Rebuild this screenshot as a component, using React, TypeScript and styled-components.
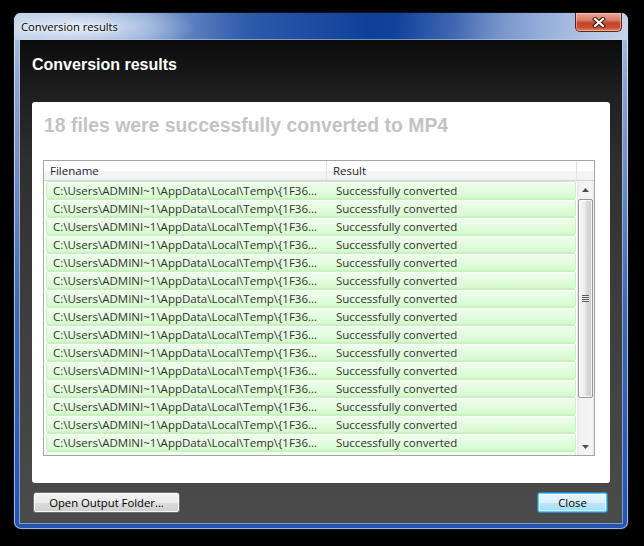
import React from "react";
import styled, { createGlobalStyle } from "styled-components";

const Global = createGlobalStyle`
  html, body { margin: 0; padding: 0; background: #000; }
  body { width: 644px; height: 546px; overflow: hidden; }
`;

const UI_FONT = `"Open Sans", "Noto Sans", sans-serif`;
const HEAD_FONT = `"Liberation Sans", Arial, sans-serif`;

const Stage = styled.div`
  padding: 13px 0 0 14px;
`;

const Window = styled.div`
  width: 614px;
  height: 516px;
  box-sizing: border-box;
  display: flex;
  flex-direction: column;
  border-radius: 7px;
  background: linear-gradient(to bottom, #b5c7e1 0px, #8aa4cd 70px, #3f68b2 300px, #2356b1 100%);
  box-shadow: 0 0 0 1px #101216, inset 0 0 0 1px rgba(255, 255, 255, 0.55);
  overflow: hidden;
`;

const TitleBar = styled.div`
  height: 27px;
  flex: none;
  display: flex;
  align-items: flex-start;
  justify-content: space-between;
  padding: 0 6px 0 7px;
  border-radius: 7px 7px 0 0;
  background:
    radial-gradient(ellipse 120px 26px at 62px 14px, rgba(232, 240, 250, 0.95), rgba(232, 240, 250, 0)),
    linear-gradient(100deg, rgba(255,255,255,0) 62%, rgba(255,255,255,0.35) 80%, rgba(255,255,255,0.5) 100%),
    linear-gradient(to right, #b3c6e2 0%, #7f9dd0 22%, #2d5aaa 38%, #0f3f99 58%, #1546a0 72%, #4f78c0 86%, #8eabd8 100%);
`;

const TitleText = styled.div`
  margin-top: 6px;
  font-family: ${UI_FONT};
  font-size: 11.2px;
  line-height: 16px;
  color: #000;
  text-shadow: 0 0 6px rgba(255, 255, 255, 0.9), 0 0 2px rgba(255, 255, 255, 0.9);
`;

const CloseCaption = styled.div`
  width: 47px;
  height: 19px;
  box-sizing: border-box;
  display: flex;
  align-items: center;
  justify-content: center;
  border: 1px solid #5a2418;
  border-top: none;
  border-radius: 0 0 5px 5px;
  background: linear-gradient(to bottom, #e9a99a 0%, #d87a63 40%, #c2442a 55%, #c6502f 80%, #e0876a 100%);
  box-shadow: inset 0 0 0 1px rgba(255, 210, 200, 0.55);
`;

const Content = styled.div`
  flex: 1;
  margin: 0 6px 6px 6px;
  display: flex;
  flex-direction: column;
  background: linear-gradient(to bottom, #0b0b0b 0px, #1f1f1f 55px, #2e2e2e 120px, #3d3d3d 260px, #4b4b4b 100%);
  box-shadow: 0 0 0 1px rgba(200, 215, 235, 0.55);
`;

const Header = styled.div`
  height: 62px;
  flex: none;
  box-sizing: border-box;
  padding: 15px 12px 0 12px;
  font-family: ${HEAD_FONT};
  font-weight: bold;
  font-size: 16px;
  line-height: 20px;
  color: #fff;
`;

const Panel = styled.div`
  height: 381px;
  flex: none;
  margin: 0 12px;
  box-sizing: border-box;
  padding: 11px 15px 0 11px;
  background: #fff;
  border-radius: 3px;
`;

const Summary = styled.div`
  padding-left: 1px;
  font-family: ${HEAD_FONT};
  font-weight: bold;
  font-size: 19.4px;
  line-height: 24px;
  color: #c3c3c3;
`;

const ListView = styled.div`
  margin-top: 23px;
  height: 296px;
  box-sizing: border-box;
  border: 1px solid #a5a5a5;
  display: flex;
  flex-direction: column;
  font-family: ${UI_FONT};
  font-size: 11.5px;
`;

const HeaderRow = styled.div`
  height: 20px;
  flex: none;
  display: flex;
  box-sizing: border-box;
  border-bottom: 1px solid #d5d5d5;
  background: linear-gradient(to bottom, #ffffff 0%, #ffffff 50%, #f4f5f7 51%, #f1f2f4 100%);
`;

const HeaderCell = styled.div<{ $w: number }>`
  width: ${(p) => p.$w}px;
  flex: none;
  box-sizing: border-box;
  padding: 1px 0 0 6px;
  border-right: 1px solid #e2e3e6;
  line-height: 18px;
  color: #1e1e1e;
  &:last-child { border-right: none; }
`;

const Body = styled.div`
  flex: 1;
  display: flex;
  min-height: 0;
`;

const Rows = styled.div`
  flex: 1;
  overflow: hidden;
`;

const Row = styled.div`
  height: 18px;
  margin: 0 1px 0 2px;
  box-sizing: border-box;
  display: flex;
  border: 1px solid #c8f3be;
  border-radius: 2px;
  background: linear-gradient(to bottom, #f0fff0 0%, #e4fcdf 50%, #d6f9ce 100%);
  box-shadow: inset 0 1px 0 rgba(255, 255, 255, 0.7);
  color: #333;
  padding-top: 1px;
  line-height: 15px;
  white-space: nowrap;
`;

const Cell = styled.div<{ $w?: number; $pad: number }>`
  ${(p) => (p.$w ? `width: ${p.$w}px; flex: none;` : `flex: 1;`)}
  box-sizing: border-box;
  padding-left: ${(p) => p.$pad}px;
  overflow: hidden;
`;

const ScrollBar = styled.div`
  width: 17px;
  flex: none;
  display: flex;
  flex-direction: column;
  background: linear-gradient(to right, #e4e4e4 0%, #f2f2f2 15%, #f4f4f4 85%, #e9e9e9 100%);
`;

const ArrowBox = styled.div`
  height: 17px;
  flex: none;
  display: flex;
  align-items: center;
  justify-content: center;
`;

const Thumb = styled.div`
  margin: 1px 1px 0 1px;
  height: 199px;
  flex: none;
  box-sizing: border-box;
  border: 1px solid #979797;
  border-radius: 2px;
  display: flex;
  align-items: center;
  justify-content: center;
  background: linear-gradient(to right, #f6f6f6 0%, #ededed 45%, #dcdcdc 55%, #cdcdcd 100%);
  box-shadow: inset 0 0 0 1px rgba(255, 255, 255, 0.75);
`;

const Grip = styled.div`
  width: 7px;
  height: 7px;
  background: repeating-linear-gradient(to bottom, #5f5f5f 0px, #5f5f5f 1px, #e8e8e8 1px, #e8e8e8 2px);
`;

const Spacer = styled.div`
  flex: 1;
`;

const Buttons = styled.div`
  margin-top: 9px;
  padding: 0 14px 0 13px;
  display: flex;
  justify-content: space-between;
`;

const Button = styled.button<{ $w: number; $default?: boolean }>`
  width: ${(p) => p.$w}px;
  height: 21px;
  box-sizing: border-box;
  padding: 1px 0 0 0;
  font-family: ${UI_FONT};
  font-size: 11.3px;
  line-height: 16px;
  color: #000;
  border-radius: 3px;
  border: 1px solid ${(p) => (p.$default ? "#3c7fb1" : "#707070")};
  background: ${(p) =>
    p.$default
      ? "linear-gradient(to bottom, #eaf6fd 0%, #d9f0fc 50%, #bee6fd 51%, #a7d9f5 100%)"
      : "linear-gradient(to bottom, #f2f2f2 0%, #ebebeb 50%, #dddddd 51%, #cfcfcf 100%)"};
  box-shadow: ${(p) =>
    p.$default
      ? "inset 0 0 0 1px #48d5fd, inset 0 0 0 2px rgba(255,255,255,0.5)"
      : "inset 0 0 0 1px rgba(255,255,255,0.8)"};
`;

const PATH = "C:\\Users\\ADMINI~1\\AppData\\Local\\Temp\\{1F36...";
const files = Array.from({ length: 16 }, () => PATH);

export default function App() {
  return (
    <>
      <Global />
      <Stage>
        <Window>
          <TitleBar>
            <TitleText>Conversion results</TitleText>
            <CloseCaption>
              <svg width="14" height="11" viewBox="0 0 14 11">
                <path d="M3 2 L11 9 M11 2 L3 9" stroke="#3b1610" strokeWidth="4.2" strokeLinecap="square" fill="none" />
                <path d="M3 2 L11 9 M11 2 L3 9" stroke="#ffffff" strokeWidth="2.2" strokeLinecap="square" fill="none" />
              </svg>
            </CloseCaption>
          </TitleBar>
          <Content>
            <Header>Conversion results</Header>
            <Panel>
              <Summary>18 files were successfully converted to MP4</Summary>
              <ListView>
                <HeaderRow>
                  <HeaderCell $w={283}>Filename</HeaderCell>
                  <HeaderCell $w={250}>Result</HeaderCell>
                  <HeaderCell $w={17} />
                </HeaderRow>
                <Body>
                  <Rows>
                    {files.map((f, i) => (
                      <Row key={i}>
                        <Cell $w={281} $pad={6}>{f}</Cell>
                        <Cell $pad={8}>Successfully converted</Cell>
                      </Row>
                    ))}
                  </Rows>
                  <ScrollBar>
                    <ArrowBox>
                      <svg width="7" height="4" viewBox="0 0 7 4">
                        <path d="M0 4 L3.5 0 L7 4 Z" fill="#4d4d4d" />
                      </svg>
                    </ArrowBox>
                    <Thumb>
                      <Grip />
                    </Thumb>
                    <Spacer />
                    <ArrowBox>
                      <svg width="7" height="4" viewBox="0 0 7 4">
                        <path d="M0 0 L7 0 L3.5 4 Z" fill="#4d4d4d" />
                      </svg>
                    </ArrowBox>
                  </ScrollBar>
                </Body>
              </ListView>
            </Panel>
            <Buttons>
              <Button $w={147}>Open Output Folder...</Button>
              <Button $w={71} $default>Close</Button>
            </Buttons>
          </Content>
        </Window>
      </Stage>
    </>
  );
}
